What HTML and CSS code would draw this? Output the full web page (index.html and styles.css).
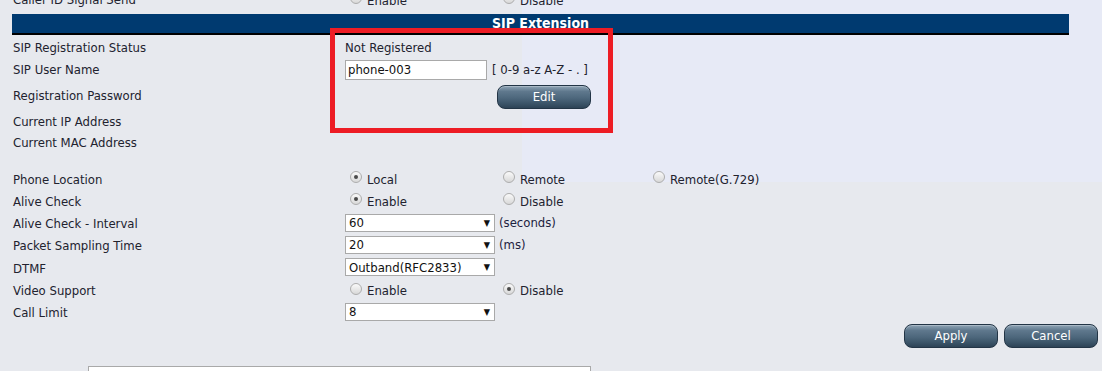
FILE: index.html
```html
<!DOCTYPE html>
<html lang="en">

<head>
    <meta charset="UTF-8">
    <title>SIP Extension</title>
    <link rel="stylesheet" href="styles.css">
</head>

<body>
    <div class="page">
        <div class="row top-row">
            <div class="label">Caller ID Signal Send</div>
            <div class="opt"><span class="radio"></span>Enable</div>
            <div class="opt"><span class="radio"></span>Disable</div>
        </div>

        <div class="section-title">SIP Extension</div>

        <div class="row">
            <div class="label">SIP Registration Status</div>
            <div class="value">Not Registered</div>
        </div>
        <div class="row">
            <div class="label">SIP User Name</div>
            <div class="value wide">
                <input type="text" class="text-input" value="phone-003">
                <span class="hint">[ 0-9 a-z A-Z - . ]</span>
            </div>
        </div>
        <div class="row tall">
            <div class="label">Registration Password</div>
            <div class="value wide">
                <button class="btn edit-btn">Edit</button>
            </div>
        </div>
        <div class="row short">
            <div class="label">Current IP Address</div>
        </div>
        <div class="row short">
            <div class="label">Current MAC Address</div>
        </div>

        <div class="spacer"></div>

        <div class="row">
            <div class="label">Phone Location</div>
            <div class="opt"><span class="radio checked"></span>Local</div>
            <div class="opt"><span class="radio"></span>Remote</div>
            <div class="opt"><span class="radio"></span>Remote(G.729)</div>
        </div>
        <div class="row">
            <div class="label">Alive Check</div>
            <div class="opt"><span class="radio checked"></span>Enable</div>
            <div class="opt"><span class="radio"></span>Disable</div>
        </div>
        <div class="row">
            <div class="label">Alive Check - Interval</div>
            <div class="value wide">
                <div class="select"><span>60</span><span class="arrow">▼</span></div>
                <span class="unit">(seconds)</span>
            </div>
        </div>
        <div class="row">
            <div class="label">Packet Sampling Time</div>
            <div class="value wide">
                <div class="select"><span>20</span><span class="arrow">▼</span></div>
                <span class="unit">(ms)</span>
            </div>
        </div>
        <div class="row">
            <div class="label">DTMF</div>
            <div class="value wide">
                <div class="select"><span>Outband(RFC2833)</span><span class="arrow">▼</span></div>
            </div>
        </div>
        <div class="row">
            <div class="label">Video Support</div>
            <div class="opt"><span class="radio"></span>Enable</div>
            <div class="opt"><span class="radio checked"></span>Disable</div>
        </div>
        <div class="row">
            <div class="label">Call Limit</div>
            <div class="value wide">
                <div class="select"><span>8</span><span class="arrow">▼</span></div>
            </div>
        </div>

        <div class="actions">
            <button class="btn">Apply</button>
            <button class="btn">Cancel</button>
        </div>

        <div class="memo-row">
            <div class="memo-label">Memo</div>
            <div class="memo-box"></div>
        </div>
    </div>

    <div class="highlight"></div>
</body>

</html>
```

FILE: styles.css
```css
html {
    overflow: hidden;
}

body {
    margin: 0;
    font-family: "DejaVu Sans Condensed", "DejaVu Sans", sans-serif;
    font-size: 13px;
    color: #22222e;
    background: linear-gradient(#e7eaf6, #e7eaf6) no-repeat right top / calc(100% - 522px) 182px, #e7e9ee;
    height: 371px;
    overflow: hidden;
}

.page {
    padding: 0 33px 0 12px;
}

.row {
    display: grid;
    grid-template-columns: 333px 153px 150px 1fr;
    align-items: center;
    height: 22.3px;
}

.row.tall {
    height: 30px;
}

.row.short {
    height: 21px;
}

.top-row {
    margin-top: -12px;
}

.label {
    padding-left: 1px;
}

.spacer ~ .row .label {
    padding-top: 2px;
}

.opt {
    display: flex;
    align-items: center;
    padding-left: 5px;
    padding-top: 2px;
}

.value.wide {
    grid-column: 2 / 5;
    display: flex;
    align-items: center;
}

.radio {
    width: 10px;
    height: 10px;
    border: 1px solid #adadad;
    border-radius: 50%;
    background: linear-gradient(#fafafa, #d8d8d8);
    margin-right: 5px;
    position: relative;
    top: -2px;
}

.radio.checked::after {
    content: "";
    position: absolute;
    left: 3px;
    top: 3px;
    width: 4px;
    height: 4px;
    border-radius: 50%;
    background: #4a4a4a;
}

.section-title {
    margin-top: 4px;
    height: 19px;
    line-height: 19px;
    background-color: #003a70;
    border-bottom: 2px solid #000;
    color: #fff;
    font-weight: bold;
    font-size: 14px;
    text-align: center;
    margin-bottom: 1px;
}

.text-input {
    width: 142px;
    height: 20px;
    box-sizing: border-box;
    border: 1px solid #a9a9a9;
    background: #fff;
    font: inherit;
    color: #111;
    padding: 0 2px;
    margin: 0;
}

.hint {
    margin-left: 5px;
}

.select {
    width: 150px;
    height: 18px;
    box-sizing: border-box;
    border: 1px solid #a9a9a9;
    background: #fff;
    display: flex;
    justify-content: space-between;
    align-items: center;
    padding: 0 4px 0 3px;
    color: #111;
}

.select .arrow {
    font-size: 9px;
}

.unit {
    margin-left: 4px;
    color: #1c2240;
}

.btn {
    width: 94px;
    height: 24px;
    border: 1px solid #233546;
    border-radius: 8px;
    background: linear-gradient(#90a5b6 0%, #5f788d 25%, #4d677c 55%, #3b5468 80%, #2d4356 100%);
    color: #fff;
    font: inherit;
    cursor: pointer;
    padding: 0;
    box-shadow: inset 0 1px 0 rgba(255, 255, 255, 0.25);
}

.edit-btn {
    margin-left: 152px;
    margin-top: 2px;
}

.spacer {
    height: 14px;
}

.actions {
    display: flex;
    justify-content: flex-end;
    gap: 6px;
    margin-top: 1px;
    margin-right: -29px;
}

.memo-row {
    display: flex;
    align-items: flex-start;
    margin-top: 18px;
}

.memo-label {
    width: 75px;
    padding-left: 1px;
    padding-top: 4px;
}

.memo-box {
    width: 503px;
    height: 30px;
    box-sizing: border-box;
    border: 1px solid #a9a9a9;
    background: #fff;
}

.highlight {
    position: absolute;
    left: 330px;
    top: 28px;
    width: 283px;
    height: 105px;
    box-sizing: border-box;
    border: 5px solid #ed1c24;
}
```
